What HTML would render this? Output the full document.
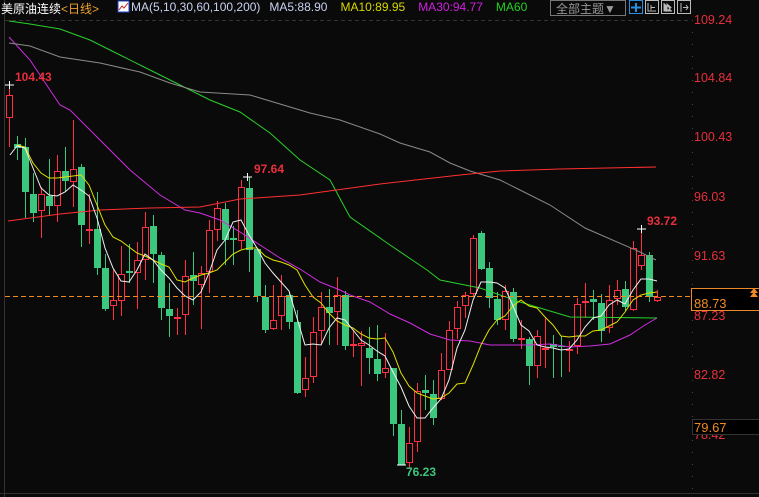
<!DOCTYPE html>
<html><head><meta charset="utf-8"><style>
html,body{margin:0;padding:0;background:#0a0a0a;width:759px;height:497px;overflow:hidden;font-family:"Liberation Sans","Noto Sans CJK SC",sans-serif}
.t{position:absolute;font-size:12px;white-space:nowrap}
.ax{position:absolute;left:694px;font-size:12.5px;color:#e8303c}
.sp{display:inline-block;width:9px}
</style></head><body>
<svg id="s" width="759" height="497" style="position:absolute;left:0;top:0">
<line x1="4.5" y1="0" x2="4.5" y2="497" stroke="#333" stroke-width="1"/>
<line x1="5" y1="20.5" x2="690" y2="20.5" stroke="#333" stroke-dasharray="4,3"/>
<line x1="692.5" y1="20" x2="692.5" y2="497" stroke="#444" stroke-dasharray="1,11"/>
<line x1="0" y1="493.5" x2="759" y2="493.5" stroke="#333"/>
<g id="g"></g>
<line x1="5" y1="296.5" x2="692" y2="296.5" stroke="#f08a24" stroke-dasharray="5,3"/>
<rect x="691.5" y="288.5" width="70" height="22" fill="#000" stroke="#e8892a"/>
<path d="M750 293 L754 288 L758 293 Z M750 297 L754 292 L758 297 Z" fill="#f08a24"/>
<rect x="550.5" y="0.5" width="75" height="15" fill="none" stroke="#777"/>
<rect x="629.5" y="0.5" width="13" height="13" fill="none" stroke="#2a8ee0"/>
<path d="M636 3v9M631 7.5h10" stroke="#2a8ee0" stroke-width="2"/>
<rect x="645.5" y="0.5" width="13" height="13" fill="none" stroke="#bbb"/>
<path d="M648 3v8h8M651 5v5M651 7.5h4" stroke="#bbb"/>
<rect x="661.5" y="0.5" width="13" height="13" fill="none" stroke="#bbb"/>
<path d="M664 3v8h8M667 4l4 3.5-4 3.5z" stroke="#bbb" fill="#bbb"/>
<rect x="677.5" y="0.5" width="13" height="13" fill="none" stroke="#bbb"/>
<path d="M681 3v9M683 7.5h5M686 5l2 2.5-2 2.5" stroke="#bbb" fill="none"/>
<rect x="118" y="1" width="11" height="11" fill="#fff" stroke="#2244cc"/>
<path d="M119 10l3-4 2 2 4-5" stroke="#d02020" fill="none"/>
</svg>
<div class="t" style="left:1px;top:0px;color:#fff">美原油连续<span style="color:#f0a030">&lt;日线&gt;</span></div>
<div class="t" style="left:131px;top:0px;color:#c8d0f0">MA(5,10,30,60,100,200)<span class="sp"></span>MA5:88.90<span class="sp" style="width:13px"></span><span style="color:#d8d800">MA10:89.95</span><span class="sp" style="width:13px"></span><span style="color:#d020e0">MA30:94.77</span><span class="sp" style="width:13px"></span><span style="color:#20d020">MA60</span></div>
<div class="t" style="left:556px;top:0px;color:#999">全部主题▼</div>
<div class="ax" style="top:13px">109.24</div>
<div class="ax" style="top:71px">104.84</div>
<div class="ax" style="top:130px">100.43</div>
<div class="ax" style="top:190px">96.03</div>
<div class="ax" style="top:249px">91.63</div>
<div class="ax" style="top:309px">87.23</div>
<div class="ax" style="top:368px">82.82</div>
<div class="ax" style="top:428px">78.42</div>
<div style="position:absolute;left:692px;top:419px;width:69px;height:16px;background:#000;border:1px solid #333;box-sizing:border-box"></div>
<div class="ax" style="top:296px;color:#f08a24;font-size:13px">88.73</div>
<div class="ax" style="top:420px;color:#f08a24;font-size:13px">79.67</div>
<div class="t" style="left:15px;top:70px;color:#e8303c;font-weight:bold">104.43</div>
<div class="t" style="left:254px;top:162px;color:#e8303c;font-weight:bold">97.64</div>
<div class="t" style="left:647px;top:214px;color:#e8303c;font-weight:bold">93.72</div>
<div class="t" style="left:406px;top:465px;color:#3cc77f;font-weight:bold">76.23</div>
<script>
var C=[[9,95,118,85,147,'r'],[17,144,148,136,160,'g'],[25,147,192,138,218,'g'],[33,194,213,173,222,'g'],[41,194,211,187,238,'r'],[49,196,206,159,215,'g'],[57,171,206,155,222,'r'],[65,171,181,147,192,'g'],[73,169,182,120,207,'r'],[81,167,225,164,247,'g'],[89,229,231,194,244,'r'],[97,229,268,192,275,'g'],[105,268,309,254,311,'g'],[113,300,306,270,320,'r'],[121,274,301,246,316,'r'],[129,271,273,244,283,'g'],[137,260,273,242,309,'r'],[145,227,260,212,280,'r'],[153,226,254,215,283,'g'],[161,255,308,252,320,'g'],[169,309,316,283,337,'g'],[177,317,319,308,335,'r'],[185,276,315,260,335,'r'],[193,275,281,252,305,'g'],[201,273,285,266,329,'r'],[209,230,272,220,293,'r'],[217,208,230,201,241,'r'],[225,209,240,203,265,'g'],[233,238,240,226,265,'g'],[241,187,241,180,249,'r'],[249,188,250,177,272,'g'],[257,249,296,249,302,'g'],[265,297,330,285,333,'g'],[273,320,329,285,330,'r'],[281,296,316,275,330,'r'],[289,295,322,292,329,'g'],[297,322,393,310,394,'g'],[305,378,390,357,397,'r'],[313,332,377,317,383,'r'],[321,307,331,292,345,'r'],[329,307,313,289,345,'g'],[337,295,312,277,345,'r'],[345,295,346,291,350,'g'],[353,344,346,330,357,'r'],[361,343,346,331,386,'r'],[369,348,358,327,374,'g'],[377,359,374,325,381,'g'],[385,368,373,333,378,'r'],[393,368,424,368,436,'g'],[401,424,465,410,465,'g'],[409,443,463,427,469,'r'],[417,391,442,383,452,'r'],[425,390,393,375,410,'g'],[433,394,418,380,425,'g'],[441,370,399,353,400,'r'],[449,330,370,321,370,'r'],[457,307,329,301,339,'r'],[465,295,306,292,318,'r'],[473,238,294,235,296,'r'],[481,233,269,231,270,'g'],[489,268,298,262,308,'g'],[497,299,320,292,325,'g'],[505,291,320,285,330,'r'],[513,292,339,288,342,'g'],[521,338,339,320,349,'r'],[529,339,366,337,385,'g'],[537,336,366,330,378,'r'],[545,348,349,318,368,'r'],[553,344,347,335,378,'g'],[561,346,347,336,377,'g'],[569,349,350,341,372,'r'],[577,304,346,298,354,'r'],[585,301,303,283,318,'r'],[593,299,302,290,320,'g'],[601,303,331,294,342,'g'],[609,300,328,285,333,'r'],[617,290,299,280,305,'r'],[625,289,307,281,311,'g'],[633,248,310,241,311,'r'],[641,255,266,229,270,'r'],[649,255,297,252,302,'g'],[657,297,301,290,302,'r']];
var L={
"#d02de0":"9,37 30,60 60,105 70,110 100,140 130,170 160,195 185,210 200,213 220,220 240,232 260,245 280,258 300,269 320,282 340,290 350,295 370,302 390,314 410,323 430,334 450,340 470,341 490,345 510,345 530,345 550,344 570,347 590,346 610,344 630,335 645,325 657,318",
"#2ad02a":"9,21 30,24 60,29 90,40 120,55 150,70 180,85 210,100 240,112 270,133 300,160 330,180 350,217 390,245 427,270 440,280 480,288 520,302 570,317 657,318",
"#8a8a8a":"9,43 30,46 60,57 100,63 140,72 170,83 200,92 250,95 280,104 310,113 340,120 380,134 400,143 430,152 450,163 470,171 500,180 520,190 550,205 585,228 640,252 656,260",
"#ff3030":"8,221 60,214 100,210 150,208 200,207 240,199 300,195 380,184 460,175 500,171 560,169 656,167",
"#e0e000":"17,145 25,147 33,163 41,173 49,178 57,178 65,177 73,176 81,175 89,185 97,205 105,225 113,237 121,241 129,247 137,253 145,256 153,260 161,264 169,267 177,280 185,282 193,278 201,275 209,273 217,270 225,262 233,254 241,250 249,248 257,248 265,256 273,260 281,262 289,265 297,270 305,285 313,297 321,303 329,313 337,321 345,325 353,328 361,334 369,338 377,339 385,338 393,352 401,373 409,386 417,393 425,396 433,399 441,398 449,393 457,384 465,383 473,365 481,345 489,330 497,320 505,316 513,306 521,300 529,306 537,308 545,317 553,325 561,336 569,337 577,336 585,336 593,331 601,330 609,326 617,322 625,312 633,300 641,295 649,293 657,292",
"#f0f0f0":"10,155 17,146 25,148 33,168 41,188 49,195 57,196 65,192 73,185 81,190 89,196 97,218 105,248 113,268 121,281 129,282 137,270 145,254 153,260 161,270 169,278 177,288 185,296 193,300 201,292 209,273 217,250 225,240 233,222 241,220 249,235 257,248 265,263 273,273 281,282 289,291 297,318 305,345 313,344 321,345 329,328 337,318 345,320 353,330 361,340 369,345 377,351 385,356 393,372 401,387 409,406 417,418 425,418 433,408 441,399 449,380 457,348 465,330 473,300 481,282 489,282 497,283 505,288 513,306 521,325 529,331 537,345 545,347 553,348 561,350 569,349 577,340 585,327 593,318 601,316 609,305 617,300 625,304 633,290 641,279 649,279 657,281"};
var h='';
C.forEach(function(c){var x=c[0],t=Math.min(c[1],c[2]),b=Math.max(c[1],c[2]);if(b-t<1)b=t+1;
if(c[5]=='r'){h+='<line x1="'+(x+.5)+'" y1="'+c[3]+'" x2="'+(x+.5)+'" y2="'+t+'" stroke="#ff3044"/><line x1="'+(x+.5)+'" y1="'+b+'" x2="'+(x+.5)+'" y2="'+c[4]+'" stroke="#ff3044"/><rect x="'+(x-2.5)+'" y="'+(t+.5)+'" width="6" height="'+Math.max(b-t-1,1)+'" fill="#0a0a0a" stroke="#ff3044"/>';}
else{h+='<line x1="'+(x+.5)+'" y1="'+c[3]+'" x2="'+(x+.5)+'" y2="'+c[4]+'" stroke="#3cc77f"/><rect x="'+(x-3)+'" y="'+t+'" width="7" height="'+(b-t)+'" fill="#3cc77f"/>';}});
for(var k in L)h+='<polyline points="'+L[k]+'" fill="none" stroke="'+k+'" stroke-width="1"/>';
h+='<path d="M5 85h9M9.5 81v8M637 229h9M641.5 225v8M243 177h9M247.5 173v8M397 465h9" stroke="#fff"/>';
document.getElementById('g').innerHTML=h;
</script>
</body></html>
